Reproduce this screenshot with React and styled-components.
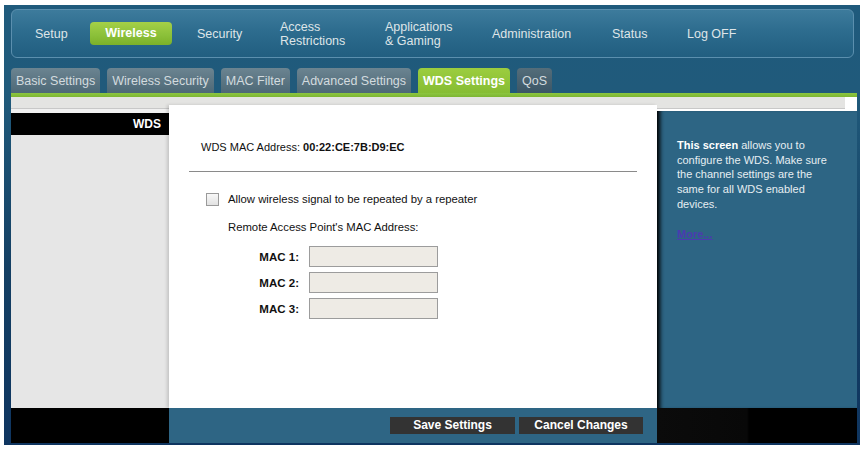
import React from "react";
import styled, { createGlobalStyle } from "styled-components";

const GlobalStyle = createGlobalStyle`
  body {
    margin: 0;
    background: #ffffff;
    font-family: "Liberation Sans", Arial, sans-serif;
  }
`;

const Frame = styled.div`
  width: 846px;
  margin: 5px 2px 0 4px;
  padding: 4px 3px 2px 7px;
  background: linear-gradient(180deg, #1f5a7c 0%, #205a7b 20%, #143f63 60%, #0f3560 100%);
`;

const NavBar = styled.div`
  display: flex;
  align-items: center;
  height: 49px;
  width: 843px;
  padding-left: 23px;
  box-sizing: border-box;
  border: 1px solid #5b8fae;
  border-radius: 6px;
  background: linear-gradient(180deg, #3d7b9c 0%, #2d6c8e 45%, #215e80 100%);
`;

const NavItem = styled.div`
  width: ${(p) => p.w}px;
  flex-shrink: 0;
  color: #dfe5e8;
  font-size: 12.5px;
  line-height: 14px;
`;

const NavButton = styled.div`
  width: 82px;
  height: 23px;
  line-height: 23px;
  text-align: center;
  border-radius: 4px;
  background: linear-gradient(180deg, #a5d047 0%, #8cc13a 55%, #7cb12a 100%);
  color: #ffffff;
  font-weight: bold;
  font-size: 12.5px;
`;

const TabRow = styled.div`
  display: flex;
  gap: 7px;
  margin-top: 10px;
  height: 25px;
  align-items: flex-end;
`;

const Tab = styled.div`
  height: 25px;
  line-height: 26px;
  padding: 0 5px;
  border-radius: 4px 4px 0 0;
  font-size: 12.5px;
  color: ${(p) => (p.active ? "#ffffff" : "#d3dbdf")};
  font-weight: ${(p) => (p.active ? "bold" : "normal")};
  background: ${(p) =>
    p.active
      ? "linear-gradient(180deg, #9ccd3f 0%, #86bd33 100%)"
      : p.dark
      ? "linear-gradient(180deg, #546d7a 0%, #3b5666 100%)"
      : "linear-gradient(180deg, #6b8491 0%, #4d6876 100%)"};
`;

const GreenLine = styled.div`
  height: 4px;
  background: linear-gradient(180deg, #8cc63f 0%, #7db532 100%);
`;

const Body = styled.div`
  background: #ffffff;
`;

const Strip = styled.div`
  height: 11px;
  margin-right: 12px;
  background: #e4e4e2;
  border-bottom: 1px solid #c8c8c8;
`;

const Columns = styled.div`
  display: grid;
  grid-template-columns: 158px 488px 200px;
  height: 299px;
`;

const LeftCol = styled.div`
  background: #e6e6e6;
  padding-top: 4px;
  box-shadow: inset 0 4px 0 #f0f0f0;
`;

const SideHeader = styled.div`
  height: 22px;
  line-height: 22px;
  background: #000000;
  color: #ffffff;
  font-weight: bold;
  font-size: 12px;
  text-align: right;
  padding-right: 8px;
`;

const Content = styled.div`
  margin-top: -4px;
  background: #ffffff;
  padding-top: 35px;
  box-shadow: -2px 0 3px rgba(0, 0, 0, 0.15);
  font-size: 11px;
  color: #111111;
`;

const AddressLine = styled.div`
  padding-left: 32px;
  line-height: 14px;
`;

const Divider = styled.div`
  margin: 17px 20px 0 20px;
  border-top: 1px solid #8a8a8a;
`;

const CheckRow = styled.label`
  display: flex;
  align-items: center;
  gap: 9px;
  margin: 20px 0 0 37px;
  line-height: 14px;
  font-size: 11.3px;
`;

const Box = styled.span`
  width: 11px;
  height: 11px;
  border: 1px solid #9a9a9a;
  background: linear-gradient(180deg, #f8f8f8, #e2e2e2);
  flex-shrink: 0;
`;

const Remote = styled.div`
  margin: 14px 0 0 59px;
  line-height: 14px;
  font-size: 11.3px;
`;

const MacList = styled.div`
  display: flex;
  flex-direction: column;
  gap: 5px;
  margin: 12px 0 0 70px;
`;

const MacRow = styled.div`
  display: flex;
  align-items: center;
  gap: 10px;
`;

const MacLabel = styled.span`
  width: 60px;
  text-align: right;
  font-weight: bold;
  font-size: 11.5px;
`;

const MacInput = styled.div`
  width: 127px;
  height: 19px;
  border: 1px solid #9c9c9c;
  background: #eeebe5;
`;

const RightCol = styled.div`
  margin-top: 2px;
  background: #2d6584;
  box-shadow: inset 6px 0 4px -3px #000000;
  padding: 27px 18px 0 20px;
  color: #e6eef2;
  font-size: 11px;
  line-height: 14.7px;
`;

const Strong = styled.b`
  color: #ffffff;
`;

const More = styled.a`
  display: inline-block;
  margin-top: 15px;
  color: #4b3bb0;
  font-weight: bold;
  text-decoration: underline;
`;

const Footer = styled.div`
  display: grid;
  grid-template-columns: 158px 488px 200px;
  height: 35px;
`;

const FootBlack = styled.div`
  background: ${(p) => (p.right ? "linear-gradient(90deg, #0b0b0b 0%, #080808 45%, #000 46%, #000 100%)" : "#000000")};
`;

const FootMid = styled.div`
  background: #2e6584;
  display: flex;
  justify-content: flex-end;
  align-items: center;
  gap: 4px;
  padding-right: 14px;
`;

const Button = styled.div`
  width: ${(p) => p.w}px;
  height: 17px;
  line-height: 17px;
  text-align: center;
  background: #333333;
  color: #ffffff;
  font-weight: bold;
  font-size: 12px;
`;

const navItems = [
  { label: "Setup", w: 55 },
  { label: "Wireless", w: 107, active: true },
  { label: "Security", w: 83 },
  { label: ["Access", "Restrictions"], w: 105 },
  { label: ["Applications", "& Gaming"], w: 107 },
  { label: "Administration", w: 120 },
  { label: "Status", w: 75 },
  { label: "Log OFF", w: 100 },
];

const tabs = [
  { label: "Basic Settings" },
  { label: "Wireless Security" },
  { label: "MAC Filter" },
  { label: "Advanced Settings" },
  { label: "WDS Settings", active: true },
  { label: "QoS", dark: true },
];

export default function App() {
  return (
    <>
      <GlobalStyle />
      <Frame>
        <NavBar>
          {navItems.map((item, i) => (
            <NavItem key={i} w={item.w}>
              {item.active ? (
                <NavButton>{item.label}</NavButton>
              ) : Array.isArray(item.label) ? (
                item.label.map((l) => <div key={l}>{l}</div>)
              ) : (
                item.label
              )}
            </NavItem>
          ))}
        </NavBar>
        <TabRow>
          {tabs.map((t) => (
            <Tab key={t.label} active={t.active} dark={t.dark}>
              {t.label}
            </Tab>
          ))}
        </TabRow>
        <GreenLine />
        <Body>
          <Strip />
          <Columns>
            <LeftCol>
              <SideHeader>WDS</SideHeader>
            </LeftCol>
            <Content>
              <AddressLine>
                WDS MAC Address: <b>00:22:CE:7B:D9:EC</b>
              </AddressLine>
              <Divider />
              <CheckRow>
                <Box />
                Allow wireless signal to be repeated by a repeater
              </CheckRow>
              <Remote>Remote Access Point's MAC Address:</Remote>
              <MacList>
                {[1, 2, 3].map((n) => (
                  <MacRow key={n}>
                    <MacLabel>MAC {n}:</MacLabel>
                    <MacInput />
                  </MacRow>
                ))}
              </MacList>
            </Content>
            <RightCol>
              <Strong>This screen</Strong> allows you to configure the WDS. Make sure
              the channel settings are the same for all WDS enabled devices.
              <br />
              <More>More...</More>
            </RightCol>
          </Columns>
          <Footer>
            <FootBlack />
            <FootMid>
              <Button w={125}>Save Settings</Button>
              <Button w={124}>Cancel Changes</Button>
            </FootMid>
            <FootBlack right />
          </Footer>
        </Body>
      </Frame>
    </>
  );
}
